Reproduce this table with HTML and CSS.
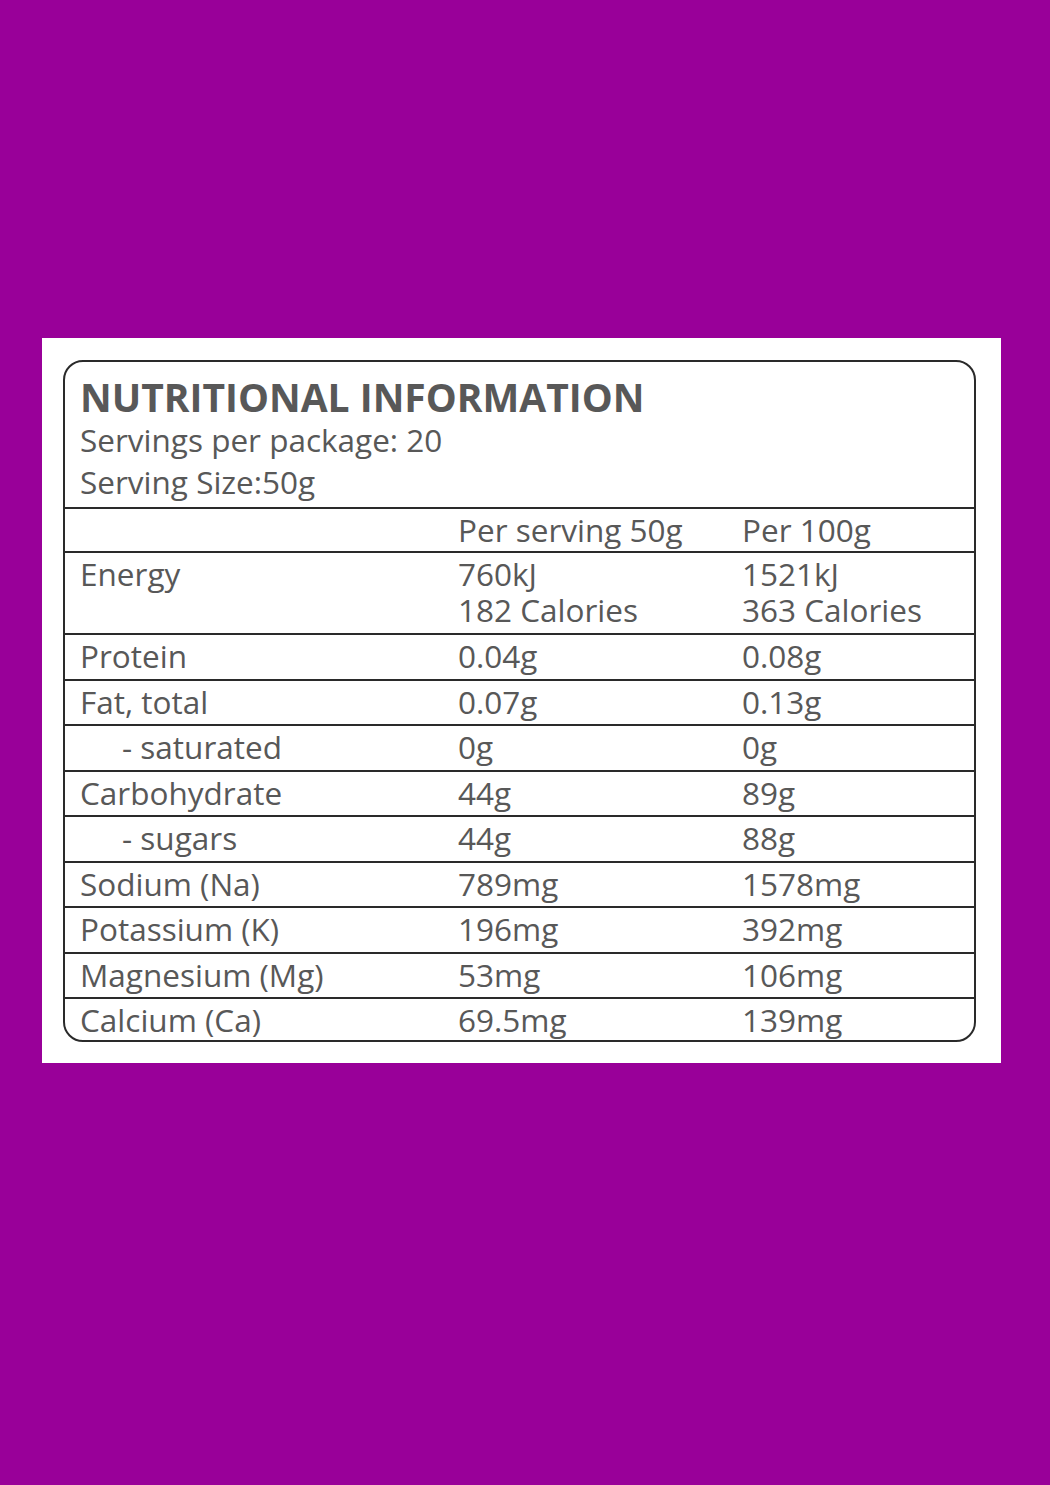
FILE: index.html
```html
<!DOCTYPE html>
<html lang="en">
<head>
<meta charset="utf-8">
<title>Nutritional Information</title>
<link rel="stylesheet" href="styles.css">
</head>
<body>
<div class="page">
  <div class="panel">
    <div class="label">
      <div class="head">
        <div class="title">NUTRITIONAL INFORMATION</div>
        <div class="sub">Servings per package: 20</div>
        <div class="sub">Serving Size:50g</div>
      </div>
      <div class="row colhead"><span></span><span>Per serving 50g</span><span>Per 100g</span></div>
      <div class="row tall"><span>Energy</span><span>760kJ<br>182 Calories</span><span>1521kJ<br>363 Calories</span></div>
      <div class="row"><span>Protein</span><span>0.04g</span><span>0.08g</span></div>
      <div class="row"><span>Fat, total</span><span>0.07g</span><span>0.13g</span></div>
      <div class="row"><span class="indent">- saturated</span><span>0g</span><span>0g</span></div>
      <div class="row"><span>Carbohydrate</span><span>44g</span><span>89g</span></div>
      <div class="row"><span class="indent">- sugars</span><span>44g</span><span>88g</span></div>
      <div class="row"><span>Sodium (Na)</span><span>789mg</span><span>1578mg</span></div>
      <div class="row"><span>Potassium (K)</span><span>196mg</span><span>392mg</span></div>
      <div class="row"><span>Magnesium (Mg)</span><span>53mg</span><span>106mg</span></div>
      <div class="row last"><span>Calcium (Ca)</span><span>69.5mg</span><span>139mg</span></div>
    </div>
  </div>
</div>
</body>
</html>
```

FILE: styles.css
```css
html, body {
  margin: 0;
  padding: 0;
  background: #990099;
}
.page {
  width: 1050px;
  height: 1485px;
  padding-top: 338px;
  box-sizing: border-box;
}
.panel {
  margin-left: 42px;
  width: 959px;
  height: 725px;
  box-sizing: border-box;
  background: #ffffff;
  padding: 22px 25px 21px 21px;
}
.label {
  border: 2px solid #2a2a2a;
  border-radius: 20px;
  height: 682px;
  box-sizing: border-box;
  overflow: hidden;
  font-family: "Open Sans", "Liberation Sans", sans-serif;
  color: #585858;
}
.head {
  padding: 13px 0 4px 15px;
  height: 145px;
  box-sizing: border-box;
}
.title {
  font-size: 39px;
  font-weight: 700;
  line-height: 44px;
}
.sub {
  font-size: 31.5px;
  line-height: 42px;
}
.row {
  display: grid;
  grid-template-columns: 393px 284px 1fr;
  border-top: 2px solid #2a2a2a;
  height: 45.5px;
  box-sizing: border-box;
  font-size: 31.5px;
  line-height: 41px;
  white-space: nowrap;
}
.row span:first-child {
  padding-left: 15px;
}
.row.colhead {
  height: 44px;
}
.row.tall {
  height: 82px;
  line-height: 36px;
  padding-top: 3px;
}
.row.last {
  height: 43px;
}
.row span.indent {
  padding-left: 57px;
}
```
